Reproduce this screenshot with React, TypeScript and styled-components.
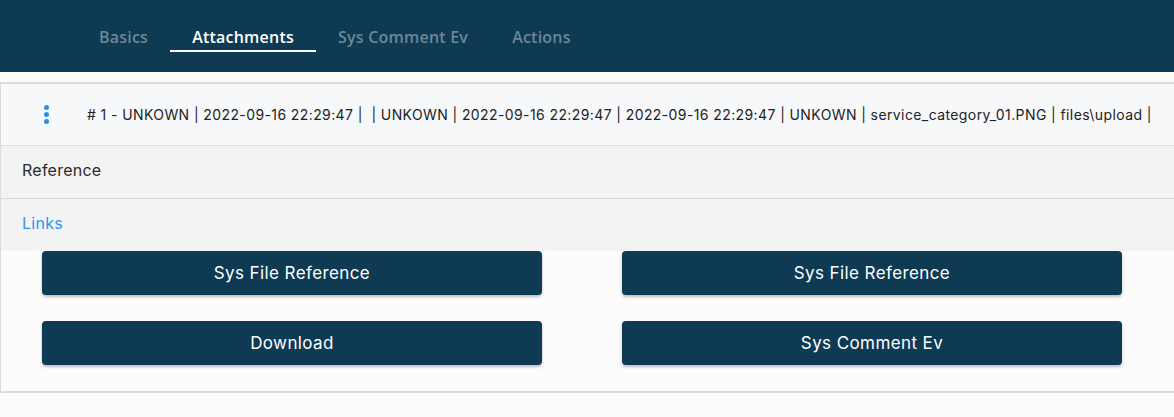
import React from "react";
import styled, { createGlobalStyle } from "styled-components";

const GlobalStyle = createGlobalStyle`
  html, body {
    margin: 0;
    padding: 0;
    background: #fbfbfb;
    font-family: "Inter", "Noto Sans", sans-serif;
  }
`;

const Header = styled.header`
  height: 72px;
  background: #0e3a54;
  display: flex;
  align-items: flex-start;
  padding-left: 77px;
`;

const Tabs = styled.nav`
  display: flex;
  margin-top: 26px;
`;

const Tab = styled.div<{ $active?: boolean }>`
  padding: 0 22px;
  height: 24px;
  line-height: 22px;
  font-family: "Open Sans", sans-serif;
  font-weight: 600;
  font-size: 16px;
  letter-spacing: 0.22px;
  color: ${(p) => (p.$active ? "#ffffff" : "#6d8797")};
  border-bottom: 2px solid ${(p) => (p.$active ? "#ffffff" : "transparent")};
`;

const Page = styled.main`
  padding-top: 10px;
`;

const Card = styled.section`
  background: #fcfcfc;
  border: 1px solid #dcdcdc;
  border-top-width: 2px;
  border-right: none;
  border-bottom-width: 2px;
  box-shadow: 0 1px 2px rgba(0, 0, 0, 0.08);
`;

const SummaryRow = styled.div`
  height: 61px;
  display: flex;
  align-items: center;
  background: #f7f8fa;
  border-bottom: 1px solid #dedede;
  padding-left: 36px;
`;

const Kebab = styled.button`
  width: 18px;
  height: 26px;
  border: none;
  background: none;
  padding: 0;
  display: flex;
  flex-direction: column;
  align-items: center;
  justify-content: center;
  gap: 2px;
  margin-right: 32px;
  cursor: pointer;
  span {
    width: 5px;
    height: 5px;
    border-radius: 50%;
    background: #2a8ee8;
  }
`;

const Summary = styled.div`
  font-size: 14px;
  color: #222;
  white-space: pre;
  letter-spacing: 0.4px;
`;

const SectionRow = styled.div<{ $link?: boolean }>`
  height: 48px;
  display: flex;
  align-items: center;
  padding-left: 21px;
  padding-bottom: 4px;
  background: #f3f3f3;
  font-size: 16px;
  letter-spacing: 0.25px;
  color: ${(p) => (p.$link ? "#2d96ea" : "#2a2a2a")};
  border-bottom: ${(p) => (p.$link ? "none" : "1px solid #d8d8d8")};
`;

const ButtonGrid = styled.div`
  display: grid;
  grid-template-columns: 500px 500px;
  column-gap: 80px;
  row-gap: 26px;
  padding: 0 0 26px 41px;
`;

const ActionButton = styled.button`
  height: 44px;
  border: none;
  border-radius: 4px;
  background: #0e3a54;
  color: #ffffff;
  font-family: "Inter", "Noto Sans", sans-serif;
  font-size: 17px;
  letter-spacing: 0.4px;
  box-shadow: 0 2px 3px rgba(0, 0, 0, 0.25);
  cursor: pointer;
`;

const tabs = ["Basics", "Attachments", "Sys Comment Ev", "Actions"];
const buttons = ["Sys File Reference", "Sys File Reference", "Download", "Sys Comment Ev"];

export default function App() {
  return (
    <>
      <GlobalStyle />
      <Header>
        <Tabs>
          {tabs.map((t) => (
            <Tab key={t} $active={t === "Attachments"}>
              {t}
            </Tab>
          ))}
        </Tabs>
      </Header>
      <Page>
        <Card>
          <SummaryRow>
            <Kebab aria-label="menu">
              <span />
              <span />
              <span />
            </Kebab>
            <Summary>
              {"# 1 - UNKOWN | 2022-09-16 22:29:47 |  | UNKOWN | 2022-09-16 22:29:47 | 2022-09-16 22:29:47 | UNKOWN | service_category_01.PNG | files\\upload |"}
            </Summary>
          </SummaryRow>
          <SectionRow>Reference</SectionRow>
          <SectionRow $link>Links</SectionRow>
          <ButtonGrid>
            {buttons.map((b, i) => (
              <ActionButton key={i}>{b}</ActionButton>
            ))}
          </ButtonGrid>
        </Card>
      </Page>
    </>
  );
}
